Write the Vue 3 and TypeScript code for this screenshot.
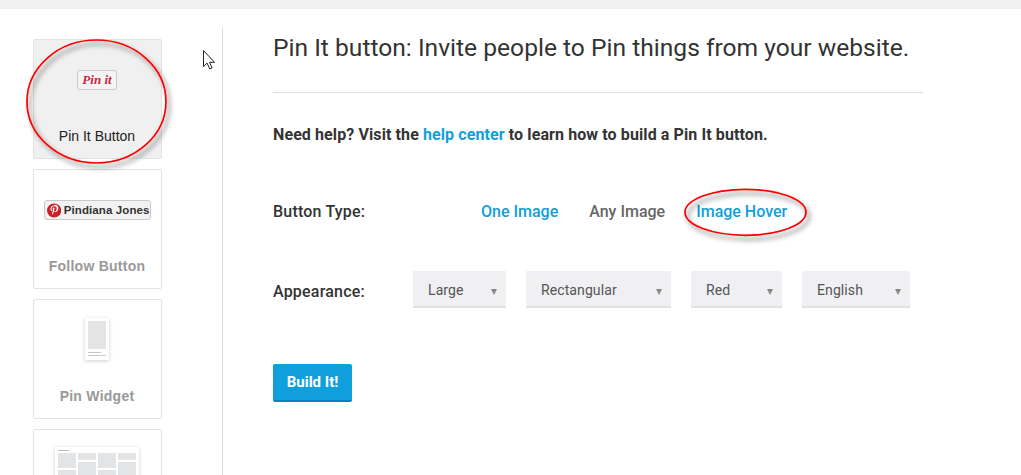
<script setup lang="ts">
interface Card {
  label: string;
  kind: string;
  active?: boolean;
}

const cards: Card[] = [
  { label: 'Pin It Button', kind: 'pin', active: true },
  { label: 'Follow Button', kind: 'follow' },
  { label: 'Pin Widget', kind: 'widget' },
  { label: '', kind: 'board' }
];

const selects = [
  { label: 'Large', width: 93 },
  { label: 'Rectangular', width: 145 },
  { label: 'Red', width: 91 },
  { label: 'English', width: 108 }
];
</script>

<template>
  <div class="page">
    <div class="top-bar"></div>
    <div class="layout">
      <aside class="sidebar">
        <div
          v-for="card in cards"
          :key="card.kind"
          class="card"
          :class="{ active: card.active }"
        >
          <div class="card__preview">
            <span v-if="card.kind === 'pin'" class="pin-badge">Pin it</span>
            <span v-else-if="card.kind === 'follow'" class="follow-badge">
              <svg width="15" height="15" viewBox="0 0 17 17">
                <circle cx="8.5" cy="8.5" r="8.5" fill="#cb2027" />
                <path
                  d="M8.9 2.6c-3.2 0-4.8 2.2-4.8 4.1 0 1.1.5 2.2 1.4 2.5.2.1.3 0 .4-.2l.1-.6c.1-.2 0-.3-.1-.5-.3-.3-.5-.7-.5-1.3 0-1.7 1.3-3.1 3.3-3.1 1.8 0 2.8 1.1 2.8 2.5 0 1.9-.9 3.5-2.1 3.5-.7 0-1.2-.6-1-1.2.2-.8.6-1.7.6-2.3 0-.5-.3-1-.9-1-.7 0-1.2.7-1.2 1.7 0 .6.2 1 .2 1l-.8 3.5c-.2 1-.1 2.3 0 2.4 0 .1.1.1.2 0 .1-.1.8-1.2 1.2-2.3l.5-1.8c.2.5.9.8 1.7.8 2.2 0 3.7-2 3.7-4.7 0-2-1.7-4-4.3-4z"
                  fill="#fff"
                />
              </svg>
              Pindiana Jones
            </span>
            <div v-else-if="card.kind === 'widget'" class="mini-widget">
              <div class="mini-widget__image"></div>
              <div class="mini-widget__line"></div>
              <div class="mini-widget__line long"></div>
            </div>
            <div v-else class="mini-board">
              <div class="mini-board__title"></div>
              <div class="mini-board__grid">
                <div class="mini-board__col">
                  <i class="h16"></i><i class="h16"></i>
                </div>
                <div class="mini-board__col">
                  <i class="h7"></i><i class="h16"></i>
                </div>
                <div class="mini-board__col">
                  <i class="h16"></i><i class="h16"></i>
                </div>
                <div class="mini-board__col">
                  <i class="h7"></i><i class="h16"></i>
                </div>
              </div>
            </div>
          </div>
          <div v-if="card.label" class="card__label">{{ card.label }}</div>
        </div>
      </aside>

      <main class="content">
        <h1 class="title">Pin It button: Invite people to Pin things from your website.</h1>
        <hr class="rule" />
        <p class="help">
          Need help? Visit the <a class="link" href="#">help center</a> to learn how to build a Pin It button.
        </p>

        <div class="row row--type">
          <span class="row__label">Button Type:</span>
          <div class="options">
            <a class="option link" href="#">One Image</a>
            <a class="option" href="#">Any Image</a>
            <a class="option link" href="#">Image Hover</a>
          </div>
        </div>

        <div class="row row--appearance">
          <span class="row__label">Appearance:</span>
          <div class="selects">
            <div
              v-for="item in selects"
              :key="item.label"
              class="select"
              :style="{ width: item.width + 'px' }"
            >
              {{ item.label }}
              <span class="select__arrow"></span>
            </div>
          </div>
        </div>

        <button class="build" type="button">Build It!</button>
      </main>
    </div>

    <!-- annotations drawn on top of the screenshot -->
    <svg class="overlay" width="1021" height="475" viewBox="0 0 1021 475">
      <defs>
        <filter id="drop" x="-20%" y="-30%" width="140%" height="170%">
          <feDropShadow dx="3" dy="4" stdDeviation="2.5" flood-color="#000" flood-opacity="0.6" />
        </filter>
      </defs>
      <ellipse cx="96.5" cy="101.5" rx="69.5" ry="61.5" fill="none" stroke="#f00" stroke-width="1.7" filter="url(#drop)" />
      <ellipse cx="745.5" cy="212.3" rx="60.5" ry="23" fill="none" stroke="#f00" stroke-width="1.7" filter="url(#drop)" />
      <path
        d="M203.5 50.5v16l3.6-3.4 2.6 5.8 2.4-1-2.6-5.6h5z"
        fill="#fff"
        stroke="#222"
        stroke-width="1"
      />
    </svg>
  </div>
</template>

<style>
html,
body {
  margin: 0;
  background: #fff;
}
</style>

<style scoped>
.page {
  position: relative;
  width: 1021px;
  height: 475px;
  overflow: hidden;
  font-family: 'Roboto', sans-serif;
  color: #333;
}

.top-bar {
  height: 9px;
  background: #f0f0f0;
}

.layout {
  display: flex;
  align-items: flex-start;
  padding-left: 33px;
}

.sidebar {
  display: flex;
  flex-direction: column;
  gap: 10px;
  width: 129px;
  padding-top: 30px;
}

.card {
  box-sizing: border-box;
  display: flex;
  flex-direction: column;
  flex-shrink: 0;
  height: 120px;
  border: 1px solid #e3e3e3;
  border-radius: 2px;
  background: #fff;
}

.card.active {
  background: #f0f0f0;
}

.card__preview {
  display: flex;
  justify-content: center;
  align-items: flex-start;
  height: 88px;
  padding-right: 1px;
}

.card__label {
  text-align: center;
  padding-right: 1px;
  font: 700 14px 'Liberation Sans', sans-serif;
  letter-spacing: 0.25px;
  color: #999;
}

.card.active .card__label {
  font-weight: 400;
  letter-spacing: 0;
  color: #222;
}

.pin-badge {
  box-sizing: border-box;
  margin-top: 30px;
  width: 40px;
  height: 20px;
  border: 1px solid #c9c9c9;
  border-radius: 3px;
  background: #f4f4f4;
  text-align: center;
  font: italic 700 13px/17px 'Liberation Serif', serif;
  color: #c5293c;
}

.follow-badge {
  box-sizing: border-box;
  display: flex;
  align-items: center;
  gap: 3px;
  margin-top: 30px;
  padding-left: 2px;
  width: 107px;
  height: 20px;
  border: 1px solid #c9c9c9;
  border-radius: 3px;
  background: #f2f2f2;
  font: 700 11.5px 'Liberation Sans', sans-serif;
  letter-spacing: 0.1px;
  color: #333;
  white-space: nowrap;
}

.mini-widget {
  box-sizing: border-box;
  margin-top: 18px;
  padding: 3px;
  width: 24px;
  height: 42px;
  background: #fff;
  box-shadow: 0 1px 4px rgba(0, 0, 0, 0.2);
}

.mini-widget__image {
  height: 28px;
  background: #e3e4e6;
}

.mini-widget__line {
  margin-top: 3px;
  width: 13px;
  height: 1px;
  background: #c8c8c8;
}

.mini-widget__line.long {
  margin-top: 2px;
  width: 18px;
}

.mini-board {
  box-sizing: border-box;
  margin-top: 17px;
  padding: 3px;
  width: 84px;
  height: 80px;
  background: #fff;
  box-shadow: 0 1px 4px rgba(0, 0, 0, 0.2);
}

.mini-board__title {
  width: 11px;
  height: 1px;
  margin-bottom: 2px;
  background: #bbb;
}

.mini-board__grid {
  display: flex;
  gap: 2px;
}

.mini-board__col {
  display: flex;
  flex-direction: column;
  gap: 2px;
  width: 18px;
}

.mini-board__col i {
  display: block;
  background: #e3e4e6;
}

.h7 {
  height: 7px;
}

.h16 {
  height: 15px;
}

.content {
  box-sizing: border-box;
  margin-left: 60px;
  margin-top: 19px;
  padding-left: 50px;
  width: 701px;
  height: 447px;
  border-left: 1px solid #ddd;
}

.title {
  margin: 0;
  padding-top: 3px;
  font-size: 24.6px;
  line-height: 34px;
  font-weight: 400;
  white-space: nowrap;
  color: #333;
}

.rule {
  margin: 27px 0 0;
  border: 0;
  border-top: 1px solid #ddd;
  width: 650px;
}

.help {
  margin: 32px 0 0;
  font-size: 16px;
  line-height: 20px;
  font-weight: 700;
  letter-spacing: 0.1px;
  color: #333;
}

.link {
  color: #0f9fdc;
  text-decoration: none;
}

.row {
  display: flex;
  align-items: center;
}

.row__label {
  width: 140px;
  font-size: 16px;
  font-weight: 500;
  letter-spacing: 0.2px;
}

.row--type {
  margin-top: 56px;
  height: 20px;
}

.row--appearance .row__label {
  padding-top: 4px;
}

.options {
  display: flex;
  gap: 31px;
  margin-left: 68px;
}

.option {
  font-size: 16px;
  font-weight: 500;
  color: #666;
  text-decoration: none;
}

.option.link {
  color: #0f9fdc;
}

.row--appearance {
  margin-top: 50px;
}

.selects {
  display: flex;
  gap: 20px;
}

.select {
  box-sizing: border-box;
  position: relative;
  height: 37px;
  padding-left: 15px;
  border-bottom: 2px solid #e2e2e4;
  background: #f0f0f2;
  font-size: 14px;
  line-height: 39px;
  letter-spacing: 0.1px;
  color: #555;
}

.select__arrow {
  position: absolute;
  right: 9px;
  top: 18px;
  border-left: 3.5px solid transparent;
  border-right: 3.5px solid transparent;
  border-top: 6px solid #888;
}

.build {
  display: block;
  box-sizing: border-box;
  margin-top: 56px;
  width: 79px;
  height: 38px;
  border: 0;
  border-bottom: 2px solid #0a83bb;
  border-radius: 2px;
  background: #0f9fdc;
  font-family: inherit;
  font-size: 15px;
  font-weight: 700;
  color: #fff;
}

.overlay {
  position: absolute;
  left: 0;
  top: 0;
  pointer-events: none;
}
</style>
